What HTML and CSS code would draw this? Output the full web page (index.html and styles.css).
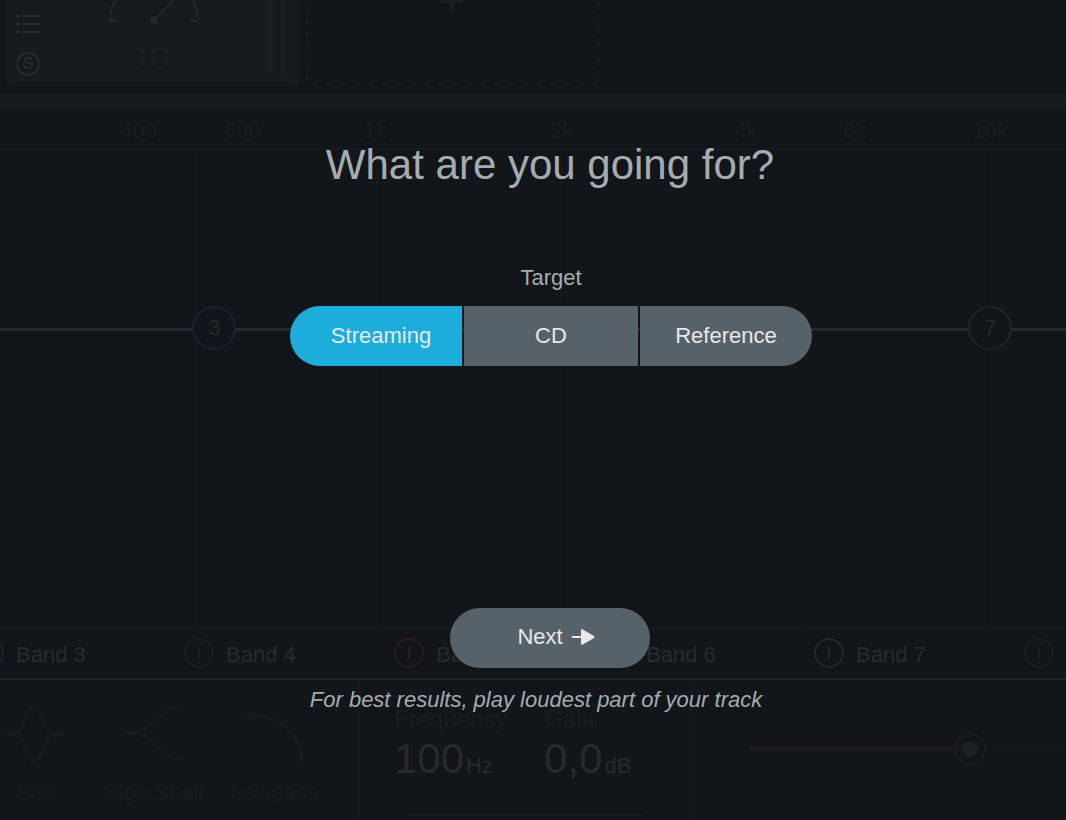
FILE: index.html
```html
<!DOCTYPE html>
<html lang="en">
<head>
<meta charset="utf-8">
<meta name="viewport" content="width=device-width, initial-scale=1">
<title>Mastering Assistant</title>
<link rel="stylesheet" href="styles.css">
</head>
<body>
<div class="app">
  <div class="editor" inert>
    <section class="rack">
      <div class="module">
        <div class="module-tools">
          <button class="icon-button" aria-label="Presets">
            <svg width="24" height="24" viewBox="0 0 24 24"><g fill="currentColor"><circle cx="2" cy="4" r="2"/><circle cx="2" cy="12" r="2"/><circle cx="2" cy="20" r="2"/></g><path d="M7 4H23M7 12H23M7 20H23" stroke="currentColor" stroke-width="2" stroke-linecap="round"/></svg>
          </button>
          <button class="solo">S</button>
        </div>
        <div class="module-dial">
          <svg width="92" height="28" viewBox="0 0 92 28" fill="none" stroke="currentColor" stroke-width="2"><path d="M10 21H2A44 44 0 0 1 90 21H82"/><path d="M46 20L72 -6"/><circle cx="46" cy="20" r="4" fill="currentColor" stroke="none"/></svg>
          <svg class="grip" width="30" height="18" viewBox="0 0 30 18" fill="currentColor"><circle cx="3" cy="3" r="3"/><circle cx="15" cy="3" r="3"/><circle cx="27" cy="3" r="3"/><circle cx="3" cy="15" r="3"/><circle cx="15" cy="15" r="3"/><circle cx="27" cy="15" r="3"/></svg>
        </div>
        <div class="meters"><span class="meter"></span><span class="meter"></span></div>
      </div>
      <button class="add-module" aria-label="Add module">
        <svg width="294" height="88" viewBox="0 0 294 88" fill="none" stroke="currentColor" stroke-width="2"><path d="M1 -10V81Q1 85 5 85H288Q292 85 292 81V-10" stroke-dasharray="6 8"/><path d="M134 1H157M146 -10V11" stroke-width="4"/></svg>
      </button>
    </section>
    <div class="divider"></div>
    <div class="scale">
      <span class="tick" style="left:13%">400</span>
      <span class="tick" style="left:22.7%">600</span>
      <span class="tick" style="left:35.2%">1k</span>
      <span class="tick" style="left:52.7%">2k</span>
      <span class="tick" style="left:70%">4k</span>
      <span class="tick" style="left:80.2%">6k</span>
      <span class="tick" style="left:92.9%">10k</span>
    </div>
    <section class="plot">
      <i class="gridline" style="left:18.2%"></i>
      <i class="gridline" style="left:35.3%"></i>
      <i class="gridline" style="left:52.5%"></i>
      <i class="gridline" style="left:75.5%"></i>
      <i class="gridline" style="left:92.9%"></i>
      <div class="curve"></div>
      <button class="node node-blue" style="left:20.1%">3</button>
      <button class="node node-teal" style="left:92.9%">7</button>
    </section>
    <section class="bands">
      <button class="band"><span class="power blue"></span><span class="band-name">Band 3</span></button>
      <button class="band"><span class="power grey"></span><span class="band-name">Band 4</span></button>
      <button class="band"><span class="power red"></span><span class="band-name">Band 5</span></button>
      <button class="band"><span class="power grey"></span><span class="band-name">Band 6</span></button>
      <button class="band"><span class="power teal"></span><span class="band-name">Band 7</span></button>
      <button class="band" aria-label="Band 8"><span class="power grey"></span></button>
    </section>
    <section class="details">
      <div class="shapes">
        <button class="shape">
          <svg width="60" height="64" viewBox="0 0 60 64"><path d="M1 32H9C21 31 22 4 30 4S39 31 51 32H59M9 32C21 33 22 60 30 60S39 33 51 32"/></svg>
          Bell
        </button>
        <button class="shape">
          <svg width="60" height="64" viewBox="0 0 60 64"><path d="M1 31H12C28 29 36 4 59 4M12 31C28 33 36 56 59 57"/></svg>
          High Shelf
        </button>
        <button class="shape">
          <svg width="60" height="64" viewBox="0 0 60 64"><path d="M2 12C36 12 56 30 58 60"/></svg>
          Lowpass
        </button>
      </div>
      <div class="params">
        <div class="param"><span class="param-name">Frequency</span><span class="param-value">100<small class="unit">Hz</small></span></div>
        <div class="param"><span class="param-name">Gain</span><span class="param-value">0,0<small class="unit">dB</small></span></div>
        <div class="pill"></div>
      </div>
      <div class="amount"><input class="slider" type="range" min="0" max="100" value="72" aria-label="Amount"></div>
    </section>
  </div>

  <main class="assistant">
    <h1 class="title">What are you going for?</h1>
    <fieldset class="target">
      <legend class="target-label">Target</legend>
      <div class="segments">
        <label class="segment"><input type="radio" name="target" checked>Streaming</label>
        <label class="segment"><input type="radio" name="target">CD</label>
        <label class="segment"><input type="radio" name="target">Reference</label>
      </div>
    </fieldset>
    <button class="next">Next
      <svg width="24" height="16" viewBox="0 0 24 16" fill="currentColor"><path d="M1 7H10V1Q10 0 11 0L23 7Q24 8 23 9L11 16Q10 16 10 15V9H1Q0 8 1 7Z"/></svg>
    </button>
    <p class="hint">For best results, play loudest part of your track</p>
  </main>
</div>
</body>
</html>
```
FILE: styles.css
```css
* {
  box-sizing: border-box;
}

body {
  margin: 0;
  background: #12161a;
  font: 22px/26px "Liberation Sans", Arial, sans-serif;
}

button {
  padding: 0;
  border: 0;
  background: none;
  color: inherit;
  font: inherit;
}

svg {
  display: block;
}

.app {
  position: relative;
  min-height: 100vh;
  overflow: hidden;
}

.editor {
  display: flex;
  flex-direction: column;
  height: 100vh;
  min-height: 720px;
  color: #28292c;
}

/* Module rack */
.rack {
  display: flex;
  flex: none;
  gap: 6px;
  height: 94px;
  padding: 0 6px 8px;
}

.module {
  display: flex;
  justify-content: space-between;
  width: 294px;
  padding: 0 14px 10px 10px;
  border-radius: 0 0 6px 6px;
  background: #16191d;
}

.module-tools {
  display: flex;
  flex-direction: column;
  gap: 16px;
  padding-top: 12px;
  color: #28292c;
}

.solo {
  width: 24px;
  height: 24px;
  border: 2px solid;
  border-radius: 50%;
  font-size: 16px;
  font-weight: bold;
  line-height: 20px;
}

.module-dial {
  display: flex;
  flex-direction: column;
  align-items: center;
  gap: 20px;
  padding-right: 0;
  color: #23262a;
}

.grip {
  color: #1b1e22;
}

.meters {
  display: flex;
  gap: 6px;
}

.meter {
  width: 6px;
  background: #1a1d21;
}

.add-module {
  color: #1a1d21;
}

.divider {
  flex: none;
  height: 16px;
  background: #15191c;
}

/* Spectrum */
.scale {
  position: relative;
  flex: none;
  height: 40px;
  border-bottom: 2px solid #16191d;
  color: #1b1b1f;
}

.tick {
  position: absolute;
  top: 8px;
  transform: translateX(-50%);
}

.plot {
  position: relative;
  flex: 1;
}

.gridline {
  position: absolute;
  top: 0;
  bottom: 0;
  width: 2px;
  background: #15171b;
}

.curve {
  position: absolute;
  top: 37%;
  width: 100%;
  height: 3px;
  margin-top: 1px;
  background: #28292d;
}

.node {
  position: absolute;
  top: 37%;
  width: 44px;
  height: 44px;
  margin: -21px 0 0 -22px;
  border: 2px solid;
  border-radius: 50%;
  background: #12161a;
  color: #28292c;
}

.node-blue {
  border-color: #182230;
}

.node-teal {
  border-color: #1c2529;
}

/* Band tabs */
.bands {
  display: flex;
  flex: none;
  height: 52px;
  padding-bottom: 2px;
  margin-left: -26px;
  border-top: 2px solid #17181c;
  border-bottom: 2px solid #1e2125;
}

.band {
  display: flex;
  flex: none;
  align-items: center;
  gap: 12px;
  width: 210px;
}

.band-name {
  padding-top: 3px;
}

.power {
  display: flex;
  align-items: center;
  justify-content: center;
  width: 30px;
  height: 30px;
  border: 2px solid;
  border-radius: 50%;
}

.power::before {
  content: "";
  width: 2px;
  height: 12px;
  background: currentColor;
}

.blue {
  color: #182434;
}

.grey {
  color: #1b1e22;
}

.red {
  color: #2f1a20;
}

.teal {
  color: #20282b;
}

/* Band details */
.details {
  display: flex;
  flex: none;
  height: 140px;
}

.shapes {
  display: flex;
  width: 360px;
  border-right: 2px solid #16191d;
  color: #18191d;
}

.shape {
  display: flex;
  flex: none;
  flex-direction: column;
  align-items: center;
  gap: 14px;
  width: 120px;
  padding-top: 22px;
}

.shape:first-child {
  margin-left: -26px;
}

.shape path {
  fill: none;
  stroke: #161a1e;
  stroke-width: 4;
  stroke-linecap: round;
}

.params {
  display: grid;
  grid-template-columns: 150px 150px;
  align-content: space-between;
  width: 332px;
  padding: 26px 0 0 34px;
  border-right: 2px solid #16191d;
}

.param {
  display: flex;
  flex-direction: column;
  gap: 3px;
}

.param-name {
  color: #1a1d21;
  font-size: 24px;
}

.param-value {
  font-size: 42px;
  line-height: 48px;
}

.unit {
  margin-left: 2px;
  font-size: 22px;
}

.pill {
  grid-column: 1 / -1;
  width: 244px;
  height: 6px;
  margin-left: 10px;
  border-top: 2px solid #16191d;
  border-radius: 30px 30px 0 0;
}

.amount {
  display: flex;
  flex: 1;
  align-items: flex-start;
  padding: 53px 0 0 57px;
}

.slider {
  appearance: none;
  width: 100%;
  height: 32px;
  margin: 0;
  background: none;
}

.slider::-webkit-slider-runnable-track {
  height: 6px;
  border-radius: 3px;
  background: linear-gradient(90deg, #1c191e 70%, #14161a 70%);
}

.slider::-webkit-slider-thumb {
  appearance: none;
  width: 32px;
  height: 32px;
  margin-top: -13px;
  border: 2px solid #1a1d21;
  border-radius: 50%;
  background: radial-gradient(circle, #1d2024 7px, transparent 8px);
}

/* Assistant overlay */
.assistant {
  position: absolute;
  inset: 0;
  display: flex;
  flex-direction: column;
  align-items: center;
  padding: 141px 0 0 34px;
  color: #a5acb0;
}

.title {
  margin: 0;
  font-size: 42px;
  font-weight: normal;
  line-height: 48px;
}

.target {
  margin: 76px 0 0;
  padding: 0 0 0 2px;
  border: 0;
}

.target-label {
  margin: 0 auto;
  padding: 0;
}

.segments {
  display: grid;
  grid-template-columns: 172px 174px 172px;
  gap: 2px;
  margin-top: 15px;
}

.segment {
  display: flex;
  align-items: center;
  justify-content: center;
  height: 60px;
  background: #566169;
  color: #e8e8e8;
}

.segment:first-child {
  padding-left: 10px;
  border-radius: 30px 0 0 30px;
}

.segment:last-child {
  border-radius: 0 30px 30px 0;
}

.segment:has(input:checked) {
  background: #1cadda;
}

.segment input {
  position: absolute;
  margin: 0;
  opacity: 0;
}

.next {
  display: flex;
  align-items: center;
  justify-content: center;
  gap: 8px;
  width: 200px;
  height: 60px;
  margin-top: 242px;
  padding: 0 0 2px 12px;
  border-radius: 30px;
  background: #566169;
  color: #e8e8e8;
}

.hint {
  margin: 19px 28px 0 0;
  font-style: italic;
}
```
